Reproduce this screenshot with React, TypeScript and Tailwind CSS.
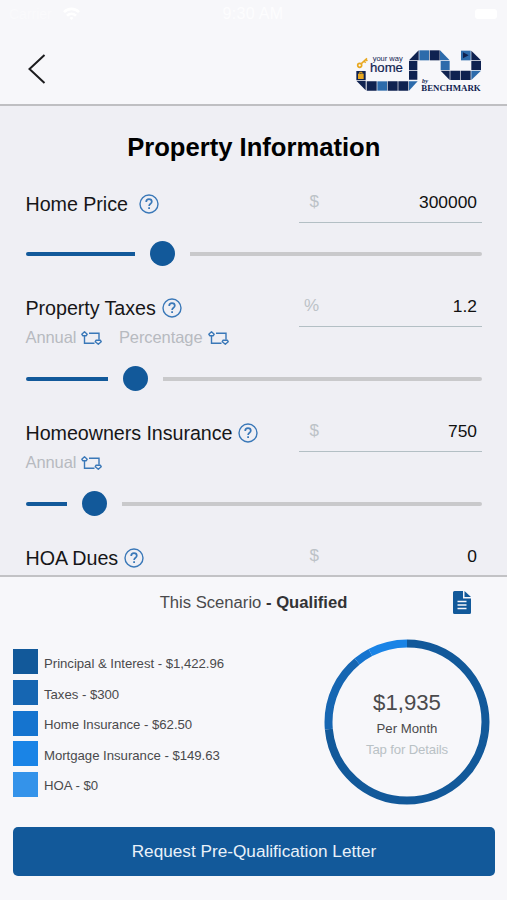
import React from "react";

const FONT = "font-['Liberation_Sans',Arial,sans-serif]";

function HelpIcon() {
  return (
    <svg width="20" height="20" viewBox="0 0 20 20" fill="none" stroke="#3a78b8" className="shrink-0">
      <circle cx="10" cy="10" r="9" strokeWidth="1.4" />
      <path d="M7.2 7.9C7.2 6.2 8.4 5.2 10 5.2s2.8 1 2.8 2.5c0 2-2.7 2.1-2.7 4.2" strokeWidth="1.7" />
      <path d="M10.1 13.2v1.8" strokeWidth="1.8" />
    </svg>
  );
}

function SwapIcon() {
  return (
    <svg width="21" height="14" viewBox="0 0 21 14" fill="none" stroke="#3a78b8" strokeWidth="1.4" className="shrink-0">
      <path d="M3.500 4.800v7.500h10" />
      <path d="M8 2.200h10v6.600" />
      <path d="M3.500 .8 6.200 3.200 5.300 4.700H1.700L.8 3.200Z" strokeLinejoin="round" />
      <path d="M17.300 13.200 14.300 10.700l.8-1.500h4.200l.9 1.500Z" strokeLinejoin="round" />
    </svg>
  );
}

function Logo() {
  const navy = "#0f2250";
  const blue = "#2d6bab";
  return (
    <svg width="128.33" height="46.67" viewBox="45 35 385 140" className="shrink-0">
      <g fill={navy}>
        <path d="M207 75 236 45V75Z" />
        <path d="M269 45h30v30h-30z" />
        <path d="M207 77h25v27h-25zM207 106h25v27h-25z" />
        <path d="M49 136h28v29Z" />
        <path d="M80 138h30v28H80zM143 138h30v28h-30zM175 138h30v28h-30z" />
        <path d="M302 106h27v28Z" />
        <path d="M331 106h29v28h-29zM362 106h30v28h-30z" />
        <path d="M394 77h29v27h-29z" />
        <path d="M394 46 423 75H394Z" />
        <path d="M49 107h28v27H49z" />
      </g>
      <g fill={blue}>
        <path d="M238 45h29v30h-29z" />
        <path d="M300 45 329 75H300Z" />
        <path d="M112 138h29v28h-29z" />
        <path d="M207 138h26L207 166Z" />
        <path d="M302 77h27v27h-27z" />
        <path d="M394 106h29L394 134Z" />
        <path d="M363 46h29v29h-29z" />
      </g>
      <path d="M369 51 386 60 369 69Z" fill={navy} />
      <path d="M54 115h17v16H54z" fill="#e8a820" />
      <path d="M59 115v-4h7v4" fill="none" stroke="#e8a820" strokeWidth="3" />
      <g stroke="#e8a820" fill="none">
        <circle cx="59" cy="90" r="6" strokeWidth="5" />
        <path d="M64 85 81 69M72 77l5 5M77 72l5 5" strokeWidth="4.5" />
      </g>
      <g fill={navy} fontFamily="Liberation Sans, Arial, sans-serif">
        <text x="98" y="76" fontSize="22.500">your way</text>
        <text x="90" y="110" fontSize="39.500" stroke={navy} strokeWidth=".6">home</text>
      </g>
      <g fill={navy} fontFamily="Liberation Serif, Times New Roman, serif" fontWeight="bold">
        <text x="246" y="143" fontSize="19" fontStyle="italic">by</text>
        <text x="244" y="167" fontSize="24.5" textLength="178" lengthAdjust="spacingAndGlyphs">BENCHMARK</text>
      </g>
    </svg>
  );
}

function StatusBar() {
  return (
    <div className="flex h-[28px] items-center justify-between pl-[9px] pr-[10px]">
      <div className="flex w-[150px] items-center gap-[9px]">
        <span className="w-[45px] text-[14px] text-[#fafafc]">Carrier</span>
        <svg width="17" height="14" viewBox="0 0 17 14" fill="none" stroke="#fff" strokeWidth="2.6">
          <path d="M1 5.2C5.2.8 11.800.8 16 5.200M4 8.700c2.600-2.500 6.400-2.500 9 0" />
          <path d="M6.500 11 8.500 13l2-2a2.900 2.900 0 0 0-4 0Z" fill="#fff" stroke="none" />
        </svg>
      </div>
      <span className="text-[16px] tracking-[0.300px] text-[#fdfdfe]">9:30 AM</span>
      <div className="flex w-[150px] justify-end">
        <span className="h-[10px] w-[22px] rounded-[3px] bg-white" />
      </div>
    </div>
  );
}

interface FieldProps {
  label: string;
  helpGap: string;
  unit: string;
  value: string;
  modes?: string[];
  filled?: string;
}

function Field({ label, helpGap, unit, value, modes, filled }: FieldProps) {
  return (
    <div className="shrink-0">
      <div className="flex h-[43px] justify-between">
        <div className={`flex h-[48px] items-center ${helpGap}`}>
          <span className="whitespace-nowrap pt-[2px] text-[19.700px] tracking-[-0.050px] text-[#161618]">{label}</span>
          <HelpIcon />
        </div>
        <div className="flex w-[183px] items-center justify-between border-b-[1.5px] border-[#b3bfc4] pl-[4px] pr-[5px] pt-[2px]">
          <span className="w-[16px] text-right text-[17px] text-[#bcc2c7]">{unit}</span>
          <span className="text-[17.400px] text-[#111]">{value}</span>
        </div>
      </div>
      {modes && (
        <div className="flex h-[21px] items-center gap-[16.500px]">
          {modes.map((m) => (
            <div key={m} className="flex items-center gap-[5px]">
              <span className="text-[16.500px] tracking-[-0.080px] text-[#b7bac0]">{m}</span>
              <SwapIcon />
            </div>
          ))}
        </div>
      )}
      {filled && (
        <div className="flex h-[61px] items-center gap-[15px]">
          <span className={`h-[4px] shrink-0 rounded-l-full bg-[#12599a] ${filled}`} />
          <span className="size-[25px] shrink-0 rounded-full bg-[#12599a]" />
          <span className="h-[4px] flex-1 rounded-r-full bg-[#c9c9cb]" />
        </div>
      )}
    </div>
  );
}

const LEGEND = [
  { color: "bg-[#12599a]", text: "Principal & Interest - $1,422.96" },
  { color: "bg-[#1666b2]", text: "Taxes - $300" },
  { color: "bg-[#1574cf]", text: "Home Insurance - $62.50" },
  { color: "bg-[#1a84e6]", text: "Mortgage Insurance - $149.63" },
  { color: "bg-[#3493ea]", text: "HOA - $0" },
];

const SLICES = [
  { color: "#12599a", amount: 1422.96 },
  { color: "#1666b2", amount: 300 },
  { color: "#1574cf", amount: 62.5 },
  { color: "#1a84e6", amount: 149.63 },
];

function PaymentRing() {
  const total = SLICES.reduce((s, x) => s + x.amount, 0);
  let start = 0;
  return (
    <div className="grid size-[166px] shrink-0 place-items-center">
      <svg width="166" height="166" viewBox="0 0 166 166" className="col-start-1 row-start-1 -rotate-90">
        {SLICES.map((s) => {
          const share = (s.amount / total) * 100;
          const offset = -start;
          start += share;
          return (
            <circle
              key={s.color}
              cx="83"
              cy="83"
              r="78.500"
              fill="none"
              stroke={s.color}
              strokeWidth="8"
              pathLength={100}
              strokeDasharray={`${share} ${100 - share}`}
              strokeDashoffset={offset}
            />
          );
        })}
      </svg>
      <div className="col-start-1 row-start-1 flex flex-col items-center pt-[3px]">
        <span className="text-[22.200px] leading-[28px] text-[#4a4a4c]">$1,935</span>
        <span className="text-[13.200px] leading-[23px] text-[#4a4a4c]">Per Month</span>
        <span className="text-[13.200px] leading-[19px] tracking-[-0.150px] text-[#b9c1c5]">Tap for Details</span>
      </div>
    </div>
  );
}

export default function App() {
  return (
    <div className={`flex h-[900px] w-[507px] flex-col overflow-hidden bg-[#f7f7fa] ${FONT}`}>
      <header className="h-[106px] shrink-0 border-b-2 border-[#bfbfc2]">
        <StatusBar />
        <div className="flex items-start justify-between pl-[27px] pr-[24px] pt-[19px]">
          <svg width="20" height="32" viewBox="0 0 20 32" fill="none" stroke="#1c1c1e" strokeWidth="2" className="mt-[6px]">
            <path d="M17.500 2 2.500 16l15 14" />
          </svg>
          <Logo />
        </div>
      </header>

      <main className="flex h-[469px] shrink-0 flex-col overflow-hidden bg-[#efeff4] pl-[25.500px] pr-[25px]">
        <h1 className="h-[74px] shrink-0 pt-[21px] text-center text-[25.600px] font-bold leading-[40px] text-black">
          Property Information
        </h1>
        <Field label="Home Price" helpGap="gap-[11px]" unit="$" value="300000" filled="w-[109.500px]" />
        <Field label="Property Taxes" helpGap="gap-[6px]" unit="%" value="1.2" modes={["Annual", "Percentage"]} filled="w-[82.500px]" />
        <Field label="Homeowners Insurance" helpGap="gap-[6px]" unit="$" value="750" modes={["Annual"]} filled="w-[41.500px]" />
        <Field label="HOA Dues" helpGap="gap-[6px]" unit="$" value="0" />
      </main>

      <footer className="flex flex-1 flex-col border-t-2 border-[#c2c2c5] px-[13px]">
        <div className="flex h-[50px] items-center justify-between">
          <span className="w-[18px]" />
          <p className="ml-[23px] pt-[2px] text-[16.650px] text-[#4a4a4c]">
            This Scenario <b className="text-[#333335]">- Qualified</b>
          </p>
          <svg width="18" height="23" viewBox="0 0 18 23" className="mr-[23px]">
            <path d="M1.500 0H10v7.500h8V21.500a1.500 1.500 0 0 1-1.500 1.500h-15A1.500 1.500 0 0 1 0 21.500v-20A1.500 1.500 0 0 1 1.500 0Z" fill="#12599a" />
            <path d="M11.500 0 18 6h-6.500Z" fill="#12599a" />
            <path d="M4.500 10.500h9M4.500 14h9M4.500 17.500h9" stroke="#f7f7fa" strokeWidth="1.500" />
          </svg>
        </div>
        <div className="flex justify-between pr-[4px] pt-[12px]">
          <ul className="flex flex-col gap-[5.600px] pt-[10.400px]">
            {LEGEND.map((l) => (
              <li key={l.text} className="flex h-[25px] items-center gap-[6px]">
                <span className={`size-[25px] ${l.color}`} />
                <span className="whitespace-nowrap pt-[4px] text-[13.200px] tracking-[-0.030px] text-[#4a4a4c]">{l.text}</span>
              </li>
            ))}
          </ul>
          <PaymentRing />
        </div>
        <button className="mt-[21.500px] h-[49px] w-[482px] shrink-0 rounded-[5px] bg-[#12599a] pt-[2px] text-[17.200px] text-[#e9f1f9]">
          Request Pre-Qualification Letter
        </button>
      </footer>
    </div>
  );
}
